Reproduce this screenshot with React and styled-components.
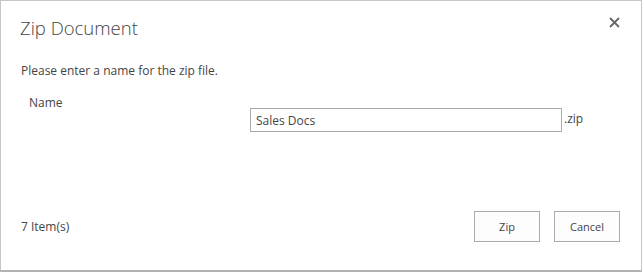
import styled, { createGlobalStyle } from "styled-components";

const GlobalStyle = createGlobalStyle`
  html, body {
    margin: 0;
    padding: 0;
    background: #ffffff;
  }
  * {
    box-sizing: border-box;
  }
`;

const Dialog = styled.div`
  width: 642px;
  height: 272px;
  border: 1px solid #c6c6c6;
  border-bottom: 2px solid #b3b3b3;
  background: #ffffff;
  display: flex;
  flex-direction: column;
  font-family: "Open Sans", "Noto Sans", sans-serif;
  color: #444444;
`;

const Header = styled.div`
  display: flex;
  align-items: flex-start;
  justify-content: space-between;
  padding: 14px 20px 0 19px;
`;

const Title = styled.h1`
  margin: 0;
  font-size: 18.5px;
  font-weight: 300;
  color: #444444;
  line-height: 26px;
`;

const CloseButton = styled.button`
  border: none;
  background: transparent;
  padding: 0;
  width: 14px;
  height: 14px;
  display: flex;
  align-items: center;
  justify-content: center;
  cursor: pointer;
`;

const Body = styled.div`
  padding: 0 20px;
`;

const Instruction = styled.p`
  margin: 21px 0 0;
  font-size: 12px;
  line-height: 17px;
`;

const FieldRow = styled.div`
  display: flex;
  padding-left: 8px;
  margin-top: 15px;
`;

const Label = styled.label`
  width: 221px;
  font-size: 12px;
  line-height: 17px;
`;

const InputGroup = styled.div`
  display: flex;
  align-items: center;
  margin-top: 14px;
`;

const TextInput = styled.input`
  width: 312px;
  height: 24px;
  border: 1px solid #ababab;
  padding: 0 5px;
  font-family: inherit;
  font-size: 12px;
  color: #444444;
  outline: none;
`;

const Suffix = styled.span`
  font-size: 12px;
  margin-left: 2px;
  margin-top: -3px;
`;

const Footer = styled.div`
  margin-top: auto;
  display: flex;
  align-items: center;
  justify-content: space-between;
  padding: 0 21px 28px 20px;
`;

const Count = styled.span`
  font-size: 12px;
`;

const Buttons = styled.div`
  display: flex;
  gap: 14px;
`;

const Button = styled.button`
  width: 66px;
  height: 31px;
  border: 1px solid #ababab;
  background: #fdfdfd;
  font-family: inherit;
  font-size: 11px;
  color: #444444;
  padding: 0;
  cursor: pointer;
`;

export default function App() {
  return (
    <>
      <GlobalStyle />
      <Dialog>
        <Header>
          <Title>Zip Document</Title>
          <CloseButton aria-label="Close">
            <svg width="11" height="11" viewBox="0 0 11 11">
              <path d="M1 1L10 10M10 1L1 10" stroke="#666666" strokeWidth="1.8" />
            </svg>
          </CloseButton>
        </Header>
        <Body>
          <Instruction>Please enter a name for the zip file.</Instruction>
          <FieldRow>
            <Label>Name</Label>
            <InputGroup>
              <TextInput defaultValue="Sales Docs" />
              <Suffix>.zip</Suffix>
            </InputGroup>
          </FieldRow>
        </Body>
        <Footer>
          <Count>7 Item(s)</Count>
          <Buttons>
            <Button>Zip</Button>
            <Button>Cancel</Button>
          </Buttons>
        </Footer>
      </Dialog>
    </>
  );
}
